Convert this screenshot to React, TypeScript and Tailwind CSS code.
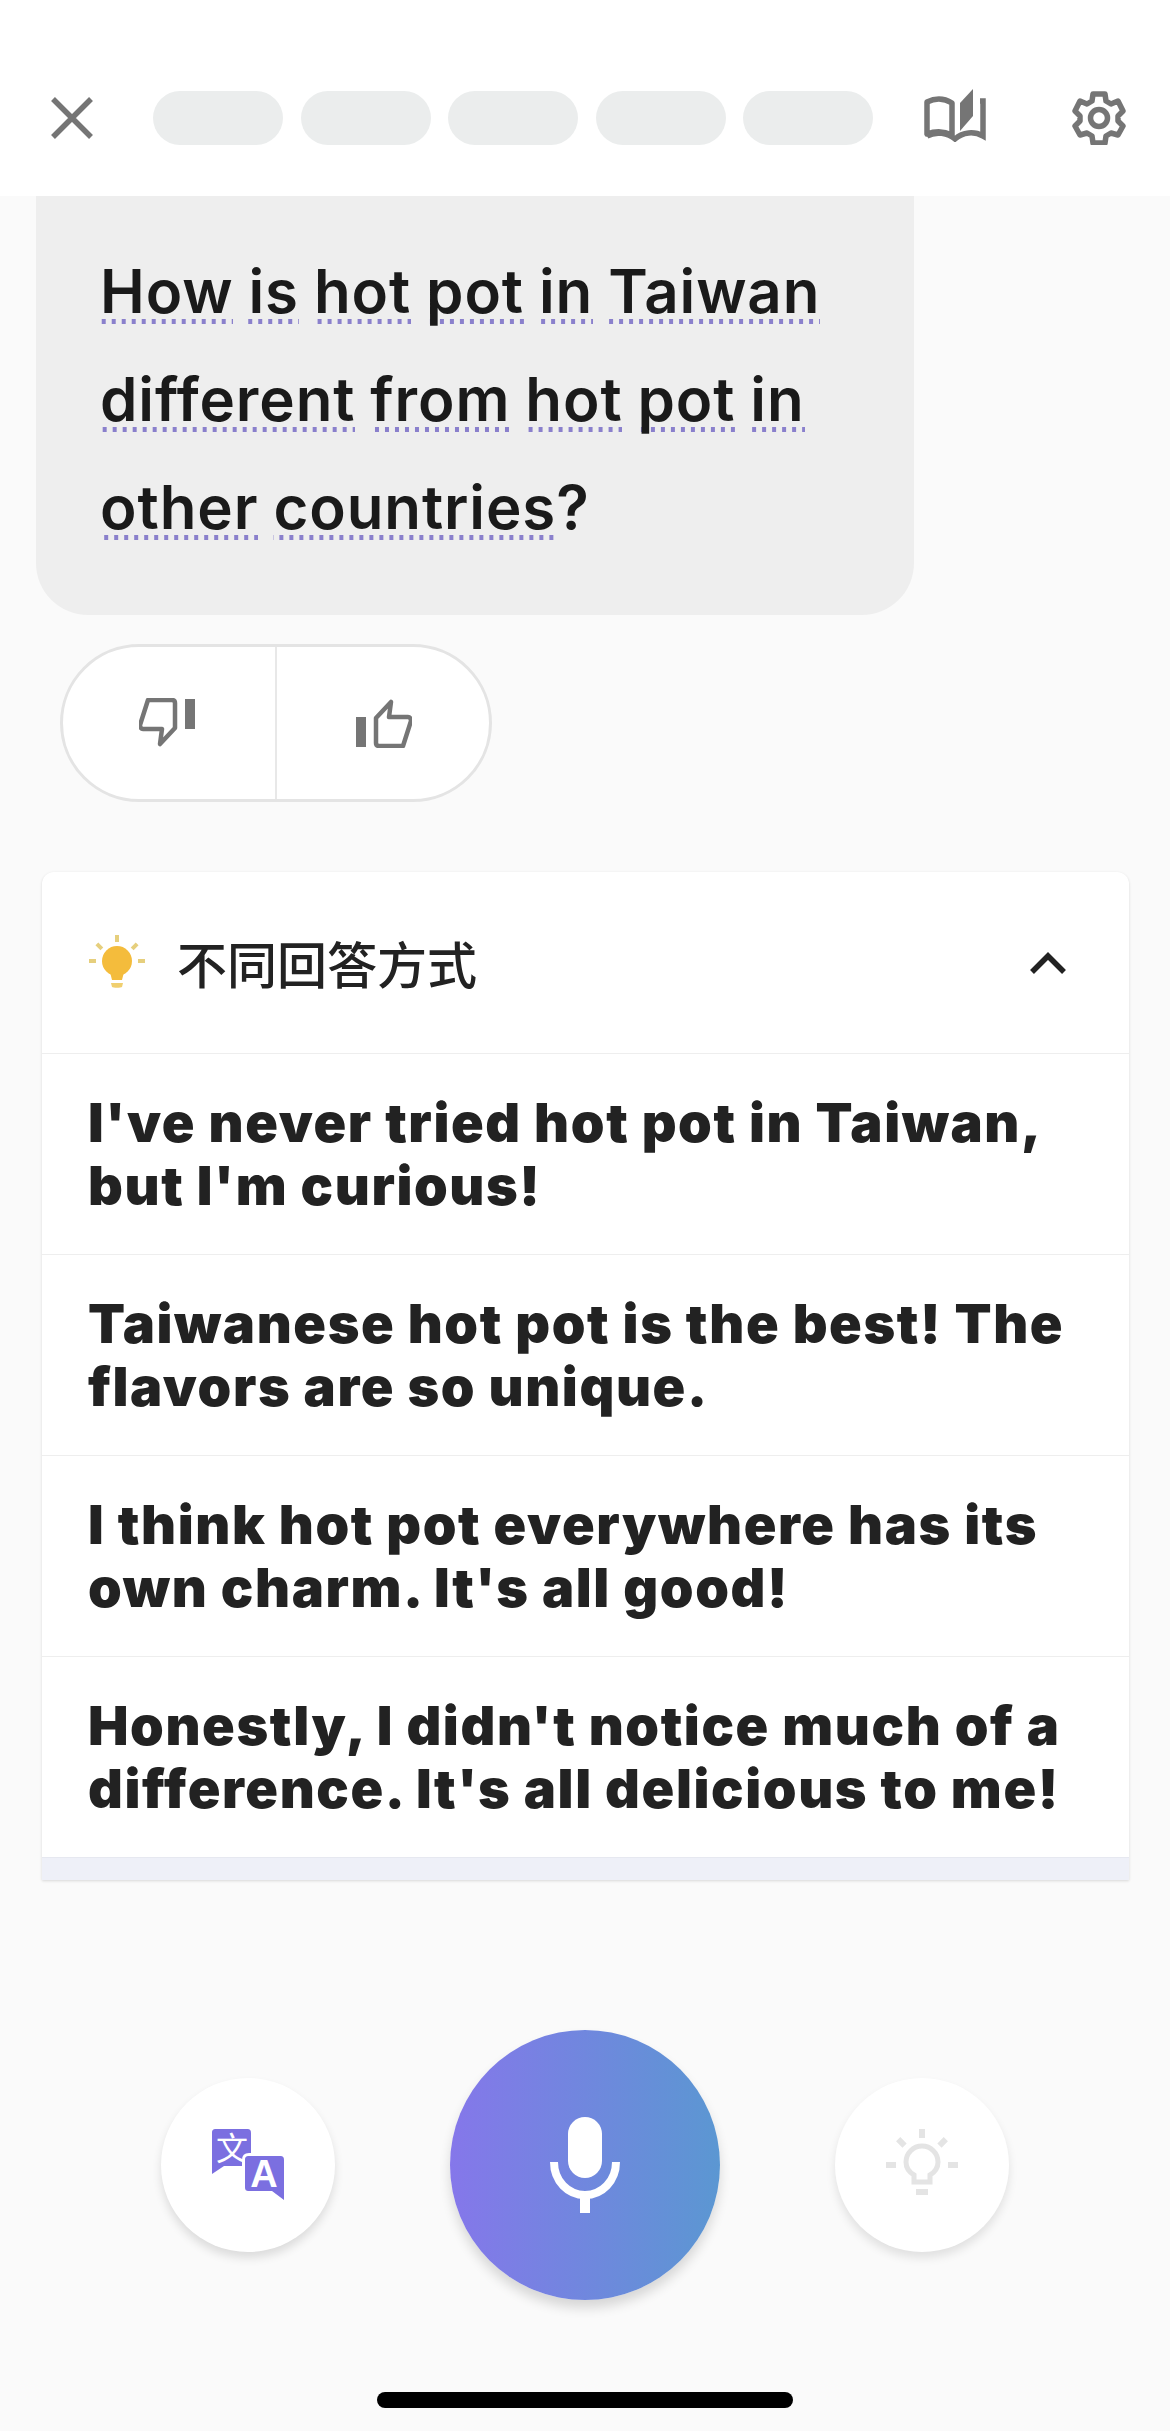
const questionLines = [
  ["How", "is", "hot", "pot", "in", "Taiwan"],
  ["different", "from", "hot", "pot", "in"],
  ["other", "countries"],
];

const replies = [
  "I've never tried hot pot in Taiwan, but I'm curious!",
  "Taiwanese hot pot is the best! The flavors are so unique.",
  "I think hot pot everywhere has its own charm. It's all good!",
  "Honestly, I didn't notice much of a difference. It's all delicious to me!",
];

function CloseIcon() {
  return (
    <svg width="42" height="42" viewBox="0 0 42 42" fill="none" stroke="#757575" strokeWidth="5.5">
      <path d="M2 2 40 40M40 2 2 40" />
    </svg>
  );
}

function BookIcon() {
  return (
    <svg width="62" height="54" viewBox="0 0 62 54" fill="none">
      <path d="M3 14c8-4 17-4 25 1v32c-8-4-17-4-25-1V14Z" stroke="#757575" strokeWidth="5.5" strokeLinejoin="round" />
      <path d="M36 15 49 1v27L36 43V15Z" fill="#757575" />
      <path d="M56 13h3v35c-9-5-20-4-28 3-7-6-19-8-28-3" stroke="#757575" strokeWidth="5.5" />
    </svg>
  );
}

function GearIcon() {
  return (
    <svg width="54" height="54" viewBox="0 0 54 54" fill="none" stroke="#757575">
      <path
        d="M21 3h12l1 7 5 3 7-3 5 10-5 5v5l5 5-5 9-7-2-5 3-1 7H21l-1-7-5-3-7 2-5-9 5-5v-5l-5-5 5-10 7 3 5-3 1-7Z"
        strokeWidth="5.5"
        strokeLinejoin="round"
      />
      <circle cx="27" cy="27" r="8.5" strokeWidth="5.5" />
    </svg>
  );
}

function ThumbDown() {
  return (
    <svg width="56" height="50" viewBox="0 0 56 50" fill="none">
      <path
        d="M9 2h24c2 0 3 1 3 3v25L21 46l2-15H4c-2 0-3-2-3-4L9 2Z"
        stroke="#757575"
        strokeWidth="4.5"
        strokeLinejoin="round"
      />
      <rect x="46" y="1" width="10" height="30" fill="#757575" />
    </svg>
  );
}

function ThumbUp() {
  return (
    <svg width="56" height="50" viewBox="0 0 56 50" fill="none">
      <path
        d="M47 48H23c-2 0-3-1-3-3V20L35 4l-2 15h19c2 0 3 2 3 4l-8 25Z"
        stroke="#757575"
        strokeWidth="4.5"
        strokeLinejoin="round"
      />
      <rect x="0" y="19" width="10" height="30" fill="#757575" />
    </svg>
  );
}

function BulbColor() {
  return (
    <svg width="56" height="56" viewBox="0 0 56 56">
      <circle cx="28" cy="26" r="15" fill="#f4bc3c" />
      <path d="M21 37h14l-2 8H23l-2-8Z" fill="#f4bc3c" />
      <path d="M22 48h12l-1 4c-1 1-9 1-10 0l-1-4Z" fill="#f0cf6f" />
      <g fill="#e6cf7d">
        <rect x="26" y="0" width="4" height="7" />
        <rect x="0" y="24" width="7" height="4" />
        <rect x="49" y="24" width="7" height="4" />
        <rect x="8" y="8" width="4" height="7" transform="rotate(-45 10 11)" />
        <rect x="44" y="8" width="4" height="7" transform="rotate(45 46 11)" />
      </g>
    </svg>
  );
}

function BulbGray() {
  return (
    <svg width="72" height="72" viewBox="0 0 72 72" fill="none">
      <path
        d="M28 53v-7c-5-3-8-8-8-13a16 16 0 0 1 32 0c0 5-3 10-8 13v7H28Z"
        stroke="#e4e4e4"
        strokeWidth="5"
      />
      <g fill="#e4e4e4">
        <rect x="33" y="0" width="6" height="9" />
        <rect x="0" y="33" width="10" height="6" />
        <rect x="62" y="33" width="10" height="6" />
        <rect x="12" y="9" width="6" height="9" transform="rotate(-45 15 13)" />
        <rect x="54" y="9" width="6" height="9" transform="rotate(45 57 13)" />
        <rect x="30" y="60" width="12" height="6" />
      </g>
    </svg>
  );
}

function TranslateIcon() {
  return (
    <svg width="72" height="72" viewBox="0 0 72 72">
      <path d="M4 0h31c3 0 4 1 4 4v33H12L0 45V4c0-3 1-4 4-4Z" fill="#7b6fe0" />
      <text x="20" y="31" textAnchor="middle" fontSize="32" fill="#fff" fontFamily="'Noto Sans CJK SC', sans-serif">
        文
      </text>
      <path
        d="M37 27h31c3 0 4 1 4 4v40L60 62H37c-3 0-4-1-4-4V31c0-3 1-4 4-4Z"
        fill="#7b6fe0"
        stroke="#fff"
        strokeWidth="6"
        paintOrder="stroke"
      />
      <text x="52" y="58" textAnchor="middle" fontSize="38" fontWeight="700" fill="#fff" fontFamily="'Liberation Sans', sans-serif">
        A
      </text>
    </svg>
  );
}

function MicIcon() {
  return (
    <svg width="70" height="96" viewBox="0 0 70 96" fill="none">
      <rect x="18" y="0" width="34" height="61" rx="17" fill="#fff" />
      <path d="M4 45c0 19 14 33 31 33s31-14 31-33" stroke="#fff" strokeWidth="8" />
      <rect x="30" y="76" width="10" height="20" fill="#fff" />
    </svg>
  );
}

export default function App() {
  return (
    <div className="flex h-[2431px] w-[1170px] flex-col overflow-hidden bg-[#fafafa] font-['Inter',sans-serif]">
      <header className="flex h-[196px] shrink-0 items-center bg-white pt-[40px]">
        <button type="button" className="ml-[51px] shrink-0">
          <CloseIcon />
        </button>
        <div className="ml-[60px] flex gap-[17.5px]">
          {[0, 1, 2, 3, 4].map((i) => (
            <div key={i} className="h-[54px] w-[130px] rounded-full bg-[#ebeded]" />
          ))}
        </div>
        <div className="ml-[51px] -mt-[6px]">
          <BookIcon />
        </div>
        <div className="ml-[86px]">
          <GearIcon />
        </div>
      </header>

      <section className="ml-[36px] h-[419px] w-[878px] rounded-b-[52px] bg-[#eeeeee] pl-[64px] pt-[20px]">
        {questionLines.map((words, i) => (
          <p key={i} className="flex h-[108px] items-end gap-[15px] text-[60px] font-semibold tracking-[0.9px] text-[#1a1a1a]">
            {words.map((word, j) => (
              <span
                key={j}
                className="bg-[linear-gradient(to_right,#8a80cc_4px,transparent_4px)] bg-[length:10px_5px] bg-bottom bg-repeat-x leading-[66px]"
              >
                {word}
              </span>
            ))}
            {i === 2 ? <span className="-ml-[15px] leading-[66px]">?</span> : null}
          </p>
        ))}
      </section>

      <div className="ml-[60px] mt-[29px] flex h-[158px] w-[432px] rounded-full border-[3px] border-[#e4e4e4] bg-white">
        <button type="button" className="flex w-[214px] items-center justify-center border-r-2 border-[#e8e8e8] pr-[4px]">
          <ThumbDown />
        </button>
        <button type="button" className="flex flex-1 items-center justify-center pl-[2px]">
          <ThumbUp />
        </button>
      </div>

      <section className="ml-[42px] mt-[70px] w-[1087px] overflow-hidden rounded-t-[12px] bg-white shadow-[0_1px_3px_rgba(0,0,0,0.14)]">
        <div className="flex h-[181px] items-center pl-[47px] pr-[63px]">
          <BulbColor />
          <span className="ml-[32px] flex-1 text-[50px] font-medium text-[#222222] font-['Noto_Sans_CJK_TC',sans-serif]">不同回答方式</span>
          <svg width="36" height="22" viewBox="0 0 36 22" fill="none" stroke="#222222" strokeWidth="5.5">
            <path d="M2 20 18 4l16 16" />
          </svg>
        </div>
        {replies.map((reply) => (
          <div key={reply} className="flex h-[201px] items-center border-t border-[#eeeeee] pl-[46px] pr-[20px]">
            <p className="text-[54px] font-black leading-[63px] tracking-[1.6px] text-[#222222]">{reply}</p>
          </div>
        ))}
        <div className="h-[23px] border-t border-[#e6e8f0] bg-[#eef0f8]" />
      </section>

      <div className="mt-[150px] flex items-center justify-center gap-[115px]">
        <button type="button" className="flex h-[174px] w-[174px] items-center justify-center rounded-full bg-white shadow-[0_6px_10px_rgba(0,0,0,0.12)]">
          <TranslateIcon />
        </button>
        <button
          type="button"
          className="flex h-[270px] w-[270px] items-center justify-center rounded-full bg-[linear-gradient(to_right,#8577ea,#5b97d2)] shadow-[0_8px_12px_rgba(0,0,0,0.14)]"
        >
          <MicIcon />
        </button>
        <button type="button" className="flex h-[174px] w-[174px] items-center justify-center rounded-full bg-white shadow-[0_6px_10px_rgba(0,0,0,0.1)]">
          <BulbGray />
        </button>
      </div>

      <div className="mx-auto mt-[92px] h-[16px] w-[416px] rounded-full bg-black" />
    </div>
  );
}
